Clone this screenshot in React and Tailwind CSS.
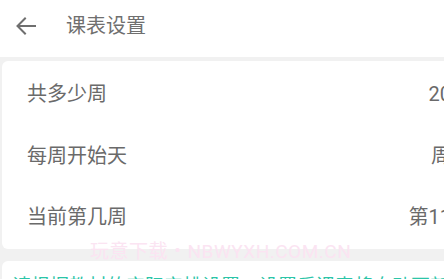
export default function App() {
  const font = { fontFamily: 'Roboto, "Noto Sans CJK SC", sans-serif' };
  return (
    <div className="w-[444px] h-[279px] overflow-hidden bg-[#f1f1f1] relative" style={font}>
      <div className="h-[57px] bg-white flex items-center pb-[6px]">
        <svg width="24" height="24" viewBox="0 0 24 24" className="ml-[14px] text-[#6f6f6f]" fill="none" stroke="currentColor" strokeWidth="2" strokeLinecap="square">
          <path d="M21 12H4" />
          <path d="M11 4.5L3.5 12l7.5 7.5" />
        </svg>
        <span className="ml-[28px] text-[20px] text-[#6f6f6f] leading-none">课表设置</span>
      </div>
      <div className="w-[480px] ml-[2px] mt-[4px] bg-white rounded-[6px] flex flex-col pt-[2px] pb-[1px]">
        {[
          ['共多少周', '20周'],
          ['每周开始天', '周一'],
          ['当前第几周', '第11周'],
        ].map(([l, r]) => (
          <div key={l} className="h-[61.5px] flex items-center justify-between pl-[25px] pr-[11px] pt-[1px] text-[20px] text-[#6a6a6a]">
            <span>{l}</span>
            <span>{r}</span>
          </div>
        ))}
      </div>
      <div className="w-[480px] ml-[2px] mt-[12px] bg-white rounded-[6px] pl-[10px] pt-[12px] text-[19px] text-[#2cc5a8] whitespace-nowrap">
        请根据教材的实际安排设置，设置后课表将自动更新
      </div>
      <div className="absolute left-[90px] top-[238px] text-[19px] text-[#fbe4f2] whitespace-nowrap tracking-[0.5px]">
        玩意下载・NBWYXH.COM.CN
      </div>
    </div>
  );
}
